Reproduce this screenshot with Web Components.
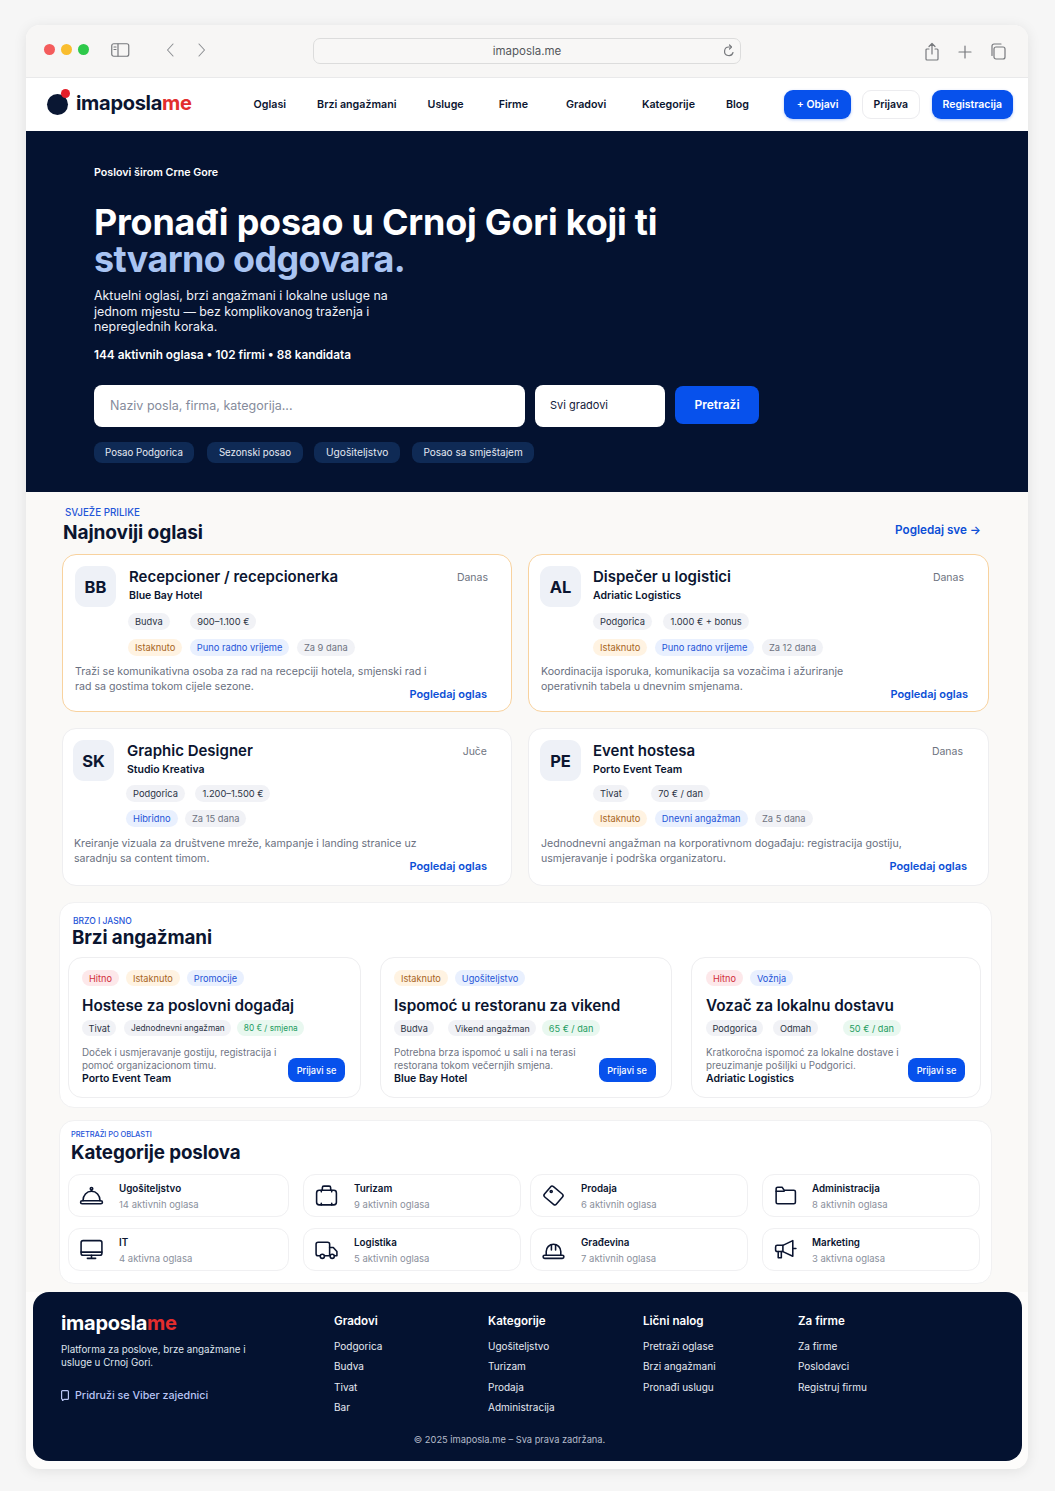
<!DOCTYPE html>
<html lang="sr">
<head>
<meta charset="utf-8">
<title>imaposla.me</title>
<style>
  html, body { margin: 0; padding: 0; }
  body { background: #f6f6f6; font-family: Inter, "Liberation Sans", sans-serif; color: #0b1530; -webkit-font-smoothing: antialiased; }
</style>
</head>
<body>
<browser-window>
  <site-nav></site-nav>
  <hero-section></hero-section>
  <main-area>
    <section-head eyebrow="SVJEŽE PRILIKE" title="Najnoviji oglasi" more="Pogledaj sve →" style="margin:0 11px 0 4px"></section-head>
    <div style="display:grid;grid-template-columns:450px 461px;gap:16px;margin-top:10px">
      <job-card featured initials="BB" title="Recepcioner / recepcionerka" company="Blue Bay Hotel" date="Danas" tags="n:Budva|n:900–1.100 €@19" badges="o:Istaknuto|b:Puno radno vrijeme|m:Za 9 dana" desc="Traži se komunikativna osoba za rad na recepciji hotela, smjenski rad i rad sa gostima tokom cijele sezone." style="--pad:12px;--gap:13px;--link:24px;--date:23px"></job-card>
      <job-card featured initials="AL" title="Dispečer u logistici" company="Adriatic Logistics" date="Danas" tags="n:Podgorica|n:1.000 € + bonus@10" badges="o:Istaknuto|b:Puno radno vrijeme|m:Za 12 dana" desc="Koordinacija isporuka, komunikacija sa vozačima i ažuriranje operativnih tabela u dnevnim smjenama." style="--pad:11px;--gap:12px;--rx:0px;--dx:1px;--link:20px;--date:24px"></job-card>
      <job-card low initials="SK" title="Graphic Designer" company="Studio Kreativa" date="Juče" tags="n:Podgorica|n:1.200–1.500 €@9" badges="b:Hibridno|m:Za 15 dana" desc="Kreiranje vizuala za društvene mreže, kampanje i landing stranice uz saradnju sa content timom." style="--pad:10px;--gap:13px;--dx:1px;--link:24px;--date:24px"></job-card>
      <job-card low initials="PE" title="Event hostesa" company="Porto Event Team" date="Danas" tags="n:Tivat|n:70 € / dan@21" badges="o:Istaknuto|b:Dnevni angažman|m:Za 5 dana" desc="Jednodnevni angažman na korporativnom događaju: registracija gostiju, usmjeravanje i podrška organizatoru." style="--pad:11px;--gap:12px;--rx:0px;--dx:1px;--link:21px;--date:25px;--desc:372px"></job-card>
    </div>
    <white-panel style="margin-top:16px;--top:12px;--bottom:9px">
      <section-head small eyebrow="BRZO I JASNO" title="Brzi angažmani" style="margin-left:4px"></section-head>
      <div style="display:grid;grid-template-columns:293px 291px 290px;justify-content:space-between;margin-top:7px">
        <gig-card badges="r:Hitno|o:Istaknuto|b:Promocije" title="Hostese za poslovni događaj" tags="n:Tivat|n:Jednodnevni angažman@8@8.3|g:80 € / smjena@6@8.3" desc="Doček i usmjeravanje gostiju, registracija i pomoć organizacionom timu." company="Porto Event Team"></gig-card>
        <gig-card badges="o:Istaknuto|b:Ugošiteljstvo" title="Ispomoć u restoranu za vikend" tags="n:Budva|n:Vikend angažman@14@8.9|g:65 € / dan" desc="Potrebna brza ispomoć u sali i na terasi restorana tokom večernjih smjena." company="Blue Bay Hotel" style="margin-left:-.5px"></gig-card>
        <gig-card badges="r:Hitno|b:Vožnja" title="Vozač za lokalnu dostavu" tags="n:Podgorica|n:Odmah@10|g:50 € / dan@25" desc="Kratkoročna ispomoć za lokalne dostave i preuzimanje pošiljki u Podgorici." company="Adriatic Logistics" style="--pad:14px"></gig-card>
      </div>
    </white-panel>
    <white-panel style="margin-top:12px;--top:8px;--bottom:12px">
      <section-head tiny eyebrow="PRETRAŽI PO OBLASTI" title="Kategorije poslova" style="margin-left:3px"></section-head>
      <div style="display:grid;grid-template-columns:235px 227px 232px 218px;row-gap:11px;margin-top:9px">
        <cat-card wide icon="bell" name="Ugošiteljstvo" count="14 aktivnih oglasa"></cat-card>
        <cat-card icon="case" name="Turizam" count="9 aktivnih oglasa"></cat-card>
        <cat-card icon="tag" name="Prodaja" count="6 aktivnih oglasa"></cat-card>
        <cat-card icon="folder" name="Administracija" count="8 aktivnih oglasa" style="--text:14px"></cat-card>
        <cat-card wide icon="screen" name="IT" count="4 aktivna oglasa"></cat-card>
        <cat-card icon="truck" name="Logistika" count="5 aktivnih oglasa"></cat-card>
        <cat-card icon="helmet" name="Građevina" count="7 aktivnih oglasa"></cat-card>
        <cat-card icon="megaphone" name="Marketing" count="3 aktivna oglasa" style="--text:14px"></cat-card>
      </div>
    </white-panel>
  </main-area>
  <site-footer></site-footer>
</browser-window>

<script>
const FONT = 'Inter, "Liberation Sans", sans-serif';

// tags come in as "kind:label@gap@font|kind:label", gap and font are optional
function pills(str) {
  return (str || '').split('|').filter(Boolean).map(part => {
    const i = part.indexOf(':');
    const [label, gap, size] = part.slice(i + 1).split('@');
    const style = (gap ? `margin-left:${gap - 6}px;` : '') + (size ? `--size:${size}px;` : '');
    return `<tag-pill kind="${part.slice(0, i)}" style="${style}">${label}</tag-pill>`;
  }).join('');
}

const ICONS = {
  bell: '<rect x="1.500" y="17" width="21" height="3" rx="1.500"/><path d="M3.800 17c0-5 3.600-9 8.200-9s8.200 4 8.200 9"/><path d="M12 8V6.500"/><circle cx="12" cy="5.500" r="1.200"/>',
  case: '<rect x="2.500" y="7" width="19" height="14" rx="2.500"/><path d="M8 7V4.500A1.500 1.500 0 0 1 9.500 3h5A1.500 1.500 0 0 1 16 4.500V7"/><path d="M7 7v1.500M17 7v1.500M7 19.500V21M17 19.500V21"/>',
  tag: '<rect x="4.500" y="5.500" width="15" height="13" rx="2" transform="rotate(40 12 12)"/><circle cx="9.800" cy="8.200" r="1"/>',
  folder: '<path d="M3 8V5.500A1.500 1.500 0 0 1 4.500 4h4.200l2 3h9.300A1.500 1.500 0 0 1 21.500 8.500v10a1.500 1.500 0 0 1-1.500 1.500H4.500A1.500 1.500 0 0 1 3 18.500z"/><path d="M3 8h7.700"/>',
  screen: '<rect x="2" y="3.500" width="20" height="14" rx="2"/><path d="M2 14.500h20"/><path d="M12 17.500v3M8 20.500h8"/>',
  truck: '<path d="M6 18H4a2 2 0 0 1-2-2V7a2 2 0 0 1 2-2h9a2 2 0 0 1 2 2v11h-5"/><path d="M15 10h3.500l3.500 4v4h-2.500"/><circle cx="8" cy="18.500" r="2"/><circle cx="17.500" cy="18.500" r="2"/>',
  helmet: '<rect x="2" y="17.500" width="20" height="3" rx="1.500"/><path d="M5 17.500V14a7 7 0 0 1 14 0v3.500"/><path d="M10 7.500v5M14 7.500v5"/>',
  megaphone: '<path d="M9.500 8 19 3.500v15L9.500 14z"/><path d="M9.500 8H4a1.500 1.500 0 0 0-1.500 1.500v3A1.500 1.500 0 0 0 4 14h5.500"/><path d="M5 14v6h3v-6"/><path d="M19 11h3"/>'
};

customElements.define('browser-window', class BrowserWindow extends HTMLElement {
  constructor() {
    super();
    this.attachShadow({mode: 'open'}).innerHTML = `
<style>
  :host { display: block; width: 1002px; margin: 25px auto 22px 26px; background: #fdfcfb; border-radius: 14px; overflow: hidden; box-shadow: 0 2px 14px rgba(0,0,0,.09); padding-bottom: 8px; }
  .bar { height: 52px; background: #f7f6f5; border-bottom: 1px solid #e9e9ea; display: flex; align-items: center; }
  .dots { display: flex; gap: 6px; margin: -3px 0 0 18px; }
  .dots i { width: 11px; height: 11px; border-radius: 50%; }
  svg { fill: none; stroke: #77797d; stroke-width: 1.200; stroke-linecap: round; stroke-linejoin: round; display: block; }
  .side { margin: -3px 0 0 22px; }
  .nav { display: flex; gap: 20px; margin: -3px 0 0 34px; }
  .nav svg { stroke: #8d8f93; stroke-width: 1.100; }
  .url { width: 426px; height: 24px; margin-left: 105px; border: 1px solid #dcdcdc; border-radius: 7px; background: #f8f7f6; display: flex; align-items: center; justify-content: center; position: relative; font: 400 11.500px ${FONT}; color: #55575c; }
  .url svg { position: absolute; right: 4px; top: 5px; }
  .acts { margin: 1px 22px 0 auto; display: flex; gap: 17.500px; align-items: center; }
</style>
<div class="bar">
  <div class="dots"><i style="background:#f45c5c"></i><i style="background:#f9bd2e"></i><i style="background:#2ec94a"></i></div>
  <svg class="side" width="19" height="14" viewBox="0 0 19 14"><rect x=".75" y=".75" width="17" height="12.500" rx="2"/><path d="M7 1v12"/><path d="M3 4h2M3 6.500h2"/></svg>
  <div class="nav">
    <svg width="12" height="16" viewBox="0 0 12 16"><path d="M9 2 3.500 8 9 14"/></svg>
    <svg width="12" height="16" viewBox="0 0 12 16"><path d="M3 2 8.500 8 3 14"/></svg>
  </div>
  <div class="url">imaposla.me
    <svg width="14" height="14" viewBox="0 0 14 14"><path d="M11 8.500A4.300 4.300 0 1 1 7 3h2"/><path d="M7.500 1 9.500 3 7.500 5"/></svg>
  </div>
  <div class="acts">
    <svg width="14" height="20" viewBox="0 0 14 20"><path d="M4 7H2a1 1 0 0 0-1 1v9a1 1 0 0 0 1 1h10a1 1 0 0 0 1-1V8a1 1 0 0 0-1-1h-2"/><path d="M7 12V2M4 4.500 7 1.500l3 3"/></svg>
    <svg width="16" height="16" viewBox="0 0 16 16"><path d="M8 2v12M2 8h12"/></svg>
    <svg width="16" height="17" viewBox="0 0 16 17"><rect x="4" y="4" width="11" height="12" rx="2"/><path d="M2 12.500V3a2 2 0 0 1 2-2h7"/></svg>
  </div>
</div>
<slot></slot>`;
  }
});

customElements.define('brand-logo', class BrandLogo extends HTMLElement {
  constructor() {
    super();
    this.attachShadow({mode: 'open'}).innerHTML = `
<style>
  :host { display: inline-flex; align-items: center; font: 700 20px ${FONT}; letter-spacing: -.3px; }
  b { font-weight: 700; color: #e22d2d; }
  :host([mark]) .dot { display: block; }
  .dot { display: none; width: 25px; height: 26px; position: relative; margin: -2px 5px 0 0; }
  .dot i { position: absolute; left: 1px; top: 5px; width: 21px; height: 21px; border-radius: 50%; background: #0a1733; }
  .dot u { position: absolute; left: 15px; top: 0; width: 9px; height: 9px; border-radius: 50%; background: #e5202a; }
</style>
<span class="dot"><i></i><u></u></span><span>imaposla</span><b>me</b>`;
  }
});

customElements.define('site-nav', class SiteNav extends HTMLElement {
  constructor() {
    super();
    this.attachShadow({mode: 'open'}).innerHTML = `
<style>
  :host { display: flex; height: 53px; background: #fff; align-items: center; padding: 0 15px 0 20px; color: #0b1530; }
  brand-logo { margin-top: -4px; }
  nav { display: flex; margin-left: 62px; gap: 31px; font: 600 10.700px ${FONT}; }
  .btns { margin-left: auto; display: flex; gap: 11px; }
  .btn { height: 29px; box-sizing: border-box; border-radius: 9px; display: flex; align-items: center; padding: 0 11px; font: 600 10.500px ${FONT}; }
  .blue { background: #0751ec; color: #fff; box-shadow: 0 1px 3px rgba(7,81,236,.3); }
  .ghost { background: #fff; border: 1px solid #ececef; padding: 0 10.500px; margin-right: 1px; }
</style>
<brand-logo mark></brand-logo>
<nav><span>Oglasi</span><span>Brzi angažmani</span><span>Usluge</span><span style="margin-left:4px">Firme</span><span style="margin-left:7px">Gradovi</span><span style="margin-left:4.500px">Kategorije</span><span>Blog</span></nav>
<div class="btns">
  <div class="btn blue" style="padding:0 12.500px">+ Objavi</div>
  <div class="btn ghost">Prijava</div>
  <div class="btn blue">Registracija</div>
</div>`;
  }
});

customElements.define('hero-section', class HeroSection extends HTMLElement {
  constructor() {
    super();
    this.attachShadow({mode: 'open'}).innerHTML = `
<style>
  :host { display: block; height: 361px; box-sizing: border-box; background: #041230; color: #fff; padding: 35px 68px 0; }
  .kick { font: 600 10.700px/14px ${FONT}; }
  h1 { margin: 24px 0 0; font: 700 35.900px/37px ${FONT}; letter-spacing: -.2px; }
  h1 span { color: #a9c4f2; display: block; letter-spacing: -.6px; }
  p { margin: 10px 0 0; font: 400 12.400px/15.500px ${FONT}; color: #eef1f8; width: 320px; }
  .stats { margin-top: 13px; font: 600 11.800px/15px ${FONT}; }
  .search { display: flex; gap: 10px; margin-top: 22px; align-items: center; }
  .q, .c { background: #fff; height: 42px; border-radius: 8px; display: flex; align-items: center; box-sizing: border-box; }
  .q { width: 431px; padding-left: 16px; color: #858b9b; font: 400 12.500px ${FONT}; }
  .c { width: 130px; padding: 0 0 2px 15px; color: #14203a; font: 400 11px ${FONT}; }
  .go { width: 84px; height: 38px; margin-top: -2px; border-radius: 8px; background: #0751ec; display: flex; align-items: center; justify-content: center; font: 600 12px ${FONT}; }
  .chips { display: flex; gap: 12px; margin-top: 15px; }
  .chips span { height: 21px; border-radius: 8px; background: #0f2a55; padding: 0 11px; display: flex; align-items: center; font: 400 9.700px ${FONT}; color: #e4e9f3; }
</style>
<div class="kick">Poslovi širom Crne Gore</div>
<h1>Pronađi posao u Crnoj Gori koji ti <span>stvarno odgovara.</span></h1>
<p>Aktuelni oglasi, brzi angažmani i lokalne usluge na jednom mjestu — bez komplikovanog traženja i nepreglednih koraka.</p>
<div class="stats">144 aktivnih oglasa • 102 firmi • 88 kandidata</div>
<div class="search">
  <div class="q">Naziv posla, firma, kategorija...</div>
  <div class="c">Svi gradovi</div>
  <div class="go">Pretraži</div>
</div>
<div class="chips"><span style="margin-right:1px">Posao Podgorica</span><span style="margin-right:-1px;padding:0 12px">Sezonski posao</span><span style="font-size:10.200px;padding:0 12px">Ugošiteljstvo</span><span style="font-size:10px">Posao sa smještajem</span></div>`;
  }
});

customElements.define('main-area', class MainArea extends HTMLElement {
  constructor() {
    super();
    this.attachShadow({mode: 'open'}).innerHTML = `
<style>
  :host { display: block; background: #faf9f7; padding: 15px 36px 8px 33px; }
  ::slotted(div) { margin-left: 3px; }
</style>
<slot></slot>`;
  }
});

customElements.define('section-head', class SectionHead extends HTMLElement {
  connectedCallback() {
    if (this.shadowRoot) return;
    const more = this.getAttribute('more');
    this.attachShadow({mode: 'open'}).innerHTML = `
<style>
  :host { display: flex; justify-content: space-between; align-items: flex-end; }
  .eb { font: 500 9.800px/12px ${FONT}; color: #1f55d8; margin-left: 2px; }
  h2 { margin: 1px 0 0; font: 700 19.100px/24px ${FONT}; letter-spacing: -.1px; color: #0b1530; }
  :host([small]) .eb { font-size: 8.500px; margin-left: 1px; }
  :host([small]) h2 { margin-top: -1px; font-size: 18.800px; }
  :host([tiny]) .eb { font-size: 7.500px; letter-spacing: -.1px; margin-left: 0; }
  :host([tiny]) h2 { margin-top: 0; font-size: 18.800px; }
  a { font: 600 11.700px/15px ${FONT}; color: #0c4fd6; margin-bottom: 6px; }
</style>
<div><div class="eb">${this.getAttribute('eyebrow')}</div><h2>${this.getAttribute('title')}</h2></div>
${more ? `<a>${more}</a>` : ''}`;
  }
});

customElements.define('tag-pill', class TagPill extends HTMLElement {
  constructor() {
    super();
    this.attachShadow({mode: 'open'}).innerHTML = `
<style>
  :host { display: inline-flex; align-items: center; height: var(--h, 17px); padding: 0 var(--px, 7px); border-radius: 9px; font: 400 var(--size, var(--base, 9.300px)) ${FONT}; background: #f1f2f6; color: #2c3445; white-space: nowrap; }
  :host([kind=m]) { color: #6e7380; }
  :host([kind=o]) { background: #fff3e2; color: #a8651d; }
  :host([kind=b]) { background: #e9f0fe; color: #1f55d8; }
  :host([kind=r]) { background: #fde8ea; color: #d2303c; }
  :host([kind=g]) { background: #e9f8f0; color: #1f9d62; }
</style>
<slot></slot>`;
  }
});

customElements.define('job-card', class JobCard extends HTMLElement {
  connectedCallback() {
    if (this.shadowRoot) return;
    const a = n => this.getAttribute(n);
    this.attachShadow({mode: 'open'}).innerHTML = `
<style>
  :host { display: block; box-sizing: border-box; height: 158px; background: #fff; border: 1px solid #eeeef0; border-radius: 14px; padding: 12px var(--date) 0 var(--pad); }
  :host([featured]) { border-color: #f8d29e; }
  .top { display: flex; gap: var(--gap, 12px); }
  .av { width: 41px; height: 41px; margin-top: -1px; border-radius: 11px; background: #eef1f7; flex: none; display: flex; align-items: center; justify-content: center; font: 700 16.500px ${FONT}; color: #0b1530; }
  .info { flex: 1; min-width: 0; }
  .head { display: flex; justify-content: space-between; align-items: flex-start; height: 19px; }
  h3 { margin: 0; font: 600 15px/19px ${FONT}; color: #0b1530; }
  .date { padding-top: 1px; font: 400 10.500px/19px ${FONT}; color: #6e7380; }
  .co { font: 600 10.500px/14px ${FONT}; margin-top: 3px; }
  .row { display: flex; gap: 7.500px; margin-top: 10px; margin-left: var(--rx, -1px); }
  .row + .row { margin-top: 9px; }
  :host([low]) .row, :host([low]) .row + .row { margin-top: 8px; }
  .foot { display: flex; justify-content: space-between; align-items: flex-end; margin: 9px calc(var(--link) - var(--date)) 0 var(--dx, 0); }
  :host([low]) .foot { margin-top: 10px; }
  .foot p { margin: 0 -120px 0 0; flex: none; width: var(--desc, 356px); font: 400 10.600px/14.500px ${FONT}; color: #6a7080; }
  .foot a { font: 600 11px/14px ${FONT}; color: #0c4fd6; margin-bottom: -7px; white-space: nowrap; }
</style>
<div class="top">
  <div class="av">${a('initials')}</div>
  <div class="info">
    <div class="head"><h3>${a('title')}</h3><span class="date">${a('date')}</span></div>
    <div class="co">${a('company')}</div>
    <div class="row">${pills(a('tags'))}</div>
    <div class="row">${pills(a('badges'))}</div>
  </div>
</div>
<div class="foot"><p>${a('desc')}</p><a>Pogledaj oglas</a></div>`;
  }
});

customElements.define('white-panel', class WhitePanel extends HTMLElement {
  constructor() {
    super();
    this.attachShadow({mode: 'open'}).innerHTML = `
<style>
  :host { display: block; background: #fff; border: 1px solid #f1f1f2; border-radius: 15px; padding: var(--top) 10px var(--bottom) 8px; }
</style>
<slot></slot>`;
  }
});

customElements.define('gig-card', class GigCard extends HTMLElement {
  connectedCallback() {
    if (this.shadowRoot) return;
    const a = n => this.getAttribute(n);
    this.attachShadow({mode: 'open'}).innerHTML = `
<style>
  :host { display: block; box-sizing: border-box; height: 141px; border: 1px solid #eeeef0; border-radius: 14px; background: #fff; padding: 12px 15px 0 var(--pad, 13px); --base: 9.200px; --h: 16px; --px: 6.500px; }
  .row { display: flex; gap: 6px; }
  .row.b { gap: 7px; --px: 7px; }
  h3 { margin: 10px 0 5px; font: 600 15.300px/19px ${FONT}; color: #0b1530; white-space: nowrap; }
  .foot { display: flex; justify-content: space-between; align-items: flex-end; margin-top: 10px; }
  p { margin: 0; width: 200px; font: 400 9.800px/13px ${FONT}; color: #6f7584; }
  strong { display: block; font: 600 10.500px/13px ${FONT}; color: #0b1530; }
  .btn { background: #0751ec; color: #fff; border-radius: 8px; width: 57px; height: 24px; display: flex; align-items: center; justify-content: center; font: 500 9.200px ${FONT}; margin-bottom: 3px; flex: none; }
</style>
<div class="row b">${pills(a('badges'))}</div>
<h3>${a('title')}</h3>
<div class="row">${pills(a('tags'))}</div>
<div class="foot"><div><p>${a('desc')}</p><strong>${a('company')}</strong></div><div class="btn">Prijavi se</div></div>`;
  }
});

customElements.define('cat-card', class CatCard extends HTMLElement {
  connectedCallback() {
    if (this.shadowRoot) return;
    const a = n => this.getAttribute(n);
    this.attachShadow({mode: 'open'}).innerHTML = `
<style>
  :host { display: flex; box-sizing: border-box; width: 218px; height: 43px; align-items: center; border: 1px solid #f0f0f2; border-radius: 12px; background: #fff; padding-left: 10px; gap: var(--text, 15px); }
  :host([wide]) { width: 221px; }
  svg { fill: none; stroke: #0b1530; stroke-width: 1.500; stroke-linecap: round; stroke-linejoin: round; flex: none; }
  div { padding-top: 1px; }
  b { display: block; font: 600 9.800px/13px ${FONT}; color: #0b1530; }
  span { display: block; margin-top: 3px; font: 400 9.500px/13px ${FONT}; color: #8a8f9c; }
</style>
<svg width="25" height="25" viewBox="0 0 24 24">${ICONS[a('icon')]}</svg>
<div><b>${a('name')}</b><span>${a('count')}</span></div>`;
  }
});

customElements.define('site-footer', class SiteFooter extends HTMLElement {
  constructor() {
    super();
    const col = (title, items, w) => `<div class="col" style="width:${w}px"><h4>${title}</h4>${items.map(i => `<a>${i}</a>`).join('')}</div>`;
    this.attachShadow({mode: 'open'}).innerHTML = `
<style>
  :host { display: block; box-sizing: border-box; height: 169px; margin: 0 6px 0 7px; border-radius: 16px; background: #041230; color: #fff; padding: 19px 28px 0; position: relative; }
  .cols { display: flex; }
  .brand { width: 273px; }
  p { margin: 8px 0 0; width: 200px; font: 400 9.800px/13px ${FONT}; color: #dfe4ee; }
  .viber { display: flex; align-items: center; gap: 6px; margin-top: 20px; font: 500 10.700px ${FONT}; color: #b9c5f5; }
  .viber svg { fill: none; stroke: #b9c5f5; stroke-width: 1.200; stroke-linejoin: round; }
  h4 { margin: 3px 0 11px; font: 600 11.600px/15px ${FONT}; }
  a { display: block; font: 400 10px/13px ${FONT}; color: #e6eaf2; margin-bottom: 7.400px; }
  .copy { position: absolute; left: 0; right: 36px; bottom: 15px; text-align: center; font: 400 9.300px/12px ${FONT}; color: #b5bccb; }
</style>
<div class="cols">
  <div class="brand">
    <brand-logo></brand-logo>
    <p>Platforma za poslove, brze angažmane i usluge u Crnoj Gori.</p>
    <div class="viber"><svg width="8" height="11" viewBox="0 0 8 11"><path d="M1.500.6h5a.9.9 0 0 1 .9.9v7a.9.9 0 0 1-.9.9H3L1.500 10.400v-1a.9.9 0 0 1-.9-.9v-7a.9.9 0 0 1 .9-.9z"/></svg>Pridruži se Viber zajednici</div>
  </div>
  ${col('Gradovi', ['Podgorica', 'Budva', 'Tivat', 'Bar'], 154)}
  ${col('Kategorije', ['Ugošiteljstvo', 'Turizam', 'Prodaja', 'Administracija'], 155)}
  ${col('Lični nalog', ['Pretraži oglase', 'Brzi angažmani', 'Pronađi uslugu'], 155)}
  ${col('Za firme', ['Za firme', 'Poslodavci', 'Registruj firmu'], 120)}
</div>
<div class="copy">© 2025 imaposla.me – Sva prava zadržana.</div>`;
  }
});
</script>
</body>
</html>
